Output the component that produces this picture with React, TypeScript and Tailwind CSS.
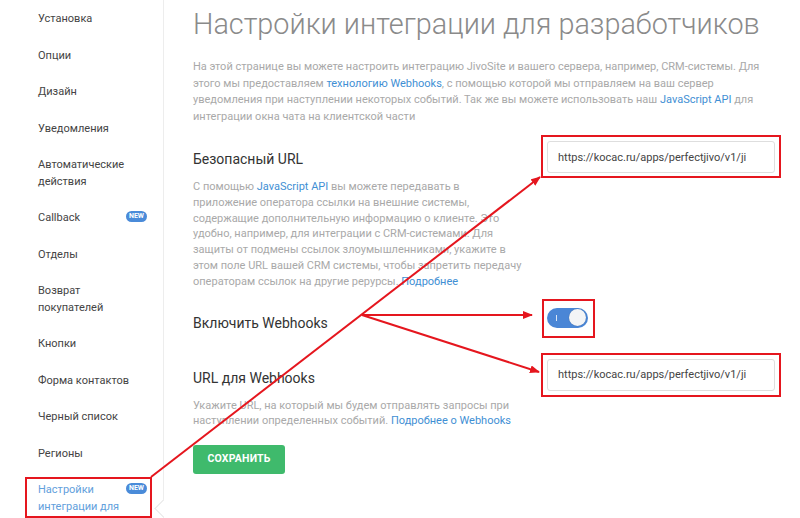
import type { ReactNode } from 'react'

type NavItem = { label: ReactNode; badge?: boolean; active?: boolean }

const navItems: NavItem[] = [
  { label: 'Установка' },
  { label: 'Опции' },
  { label: 'Дизайн' },
  { label: 'Уведомления' },
  { label: <>Автоматические<br />действия</> },
  { label: 'Callback', badge: true },
  { label: 'Отделы' },
  { label: <>Возврат<br />покупателей</> },
  { label: 'Кнопки' },
  { label: 'Форма контактов' },
  { label: 'Черный список' },
  { label: 'Регионы' },
  { label: <>Настройки<br />интеграции для<br />разработчиков</>, badge: true, active: true },
]

function NewBadge() {
  return (
    <span className="absolute right-[16px] top-[11px] flex h-[11px] w-[21px] items-center justify-center rounded-full bg-[#4a8bd9] text-[7px] font-bold leading-none text-white">
      NEW
    </span>
  )
}

function Link({ children }: { children: ReactNode }) {
  return <a className="text-[#3f8fd4]">{children}</a>
}

function UrlInput() {
  return (
    <input
      readOnly
      value="https://kocac.ru/apps/perfectjivo/v1/jivosite/webhook"
      className="h-[32px] w-[228px] rounded-[3px] border border-[#dedede] bg-white pl-[10px] pr-[28px] text-[11px] text-[#444] outline-none"
    />
  )
}

function Toggle() {
  return (
    <div className="relative h-[20px] w-[41px] rounded-full bg-[#4a86d6]">
      <span className="absolute left-[9px] top-[7px] h-[6px] w-[1px] bg-white/80" />
      <span className="absolute right-[2px] top-[1.5px] h-[17px] w-[17px] rounded-full bg-[#f3f4f6] shadow-[0_0_1px_rgba(0,0,0,0.3)]" />
    </div>
  )
}

export default function App() {
  return (
    <div className="relative flex h-[518px] w-[800px] overflow-hidden bg-white font-['Roboto','Liberation_Sans',sans-serif]">
      {/* SIDEBAR */}
      <aside className="relative w-[164px] shrink-0 border-r border-[#ededed] pt-[1px]">
        <ul>
          {navItems.map((item, i) => (
            <li
              key={i}
              className={`relative py-[10px] pl-[38px] pr-[16px] text-[11px] leading-[16.5px] ${
                item.active ? 'text-[#62a0dc]' : 'text-[#444]'
              }`}
            >
              {item.label}
              {item.badge && <NewBadge />}
            </li>
          ))}
        </ul>
        <span className="absolute right-[-7px] top-[502px] h-[13px] w-[13px] rotate-45 border-b border-l border-[#e6e6e6] bg-white" />
      </aside>

      {/* CONTENT */}
      <main className="flex-1 pl-[29px] pt-[5px]">
        <h1 className="whitespace-nowrap text-[28.8px] font-light leading-[38px] text-[#8a8a8a]">
          Настройки интеграции для разработчиков
        </h1>
        <p className="mt-[16px] whitespace-nowrap text-[11px] leading-[16.7px] text-[#a9a9a9]">
          На этой странице вы можете настроить интеграцию JivoSite и вашего сервера, например, CRM-системы. Для
          <br />
          этого мы предоставляем <Link>технологию Webhooks</Link>, с помощью которой мы отправляем на ваш сервер
          <br />
          уведомления при наступлении некоторых событий. Так же вы можете использовать наш <Link>JavaScript API</Link> для
          <br />
          интеграции окна чата на клиентской части
        </p>

        <div className="mt-[15.2px] grid grid-cols-[335px_228px] gap-x-[19px]">
          <div>
            <h2 className="pt-[8px] text-[14px] leading-[20px] text-[#333]">Безопасный URL</h2>
            <p className="mt-[10px] whitespace-nowrap text-[11px] leading-[15.8px] text-[#a9a9a9]">
              С помощью <Link>JavaScript API</Link> вы можете передавать в
              <br />
              приложение оператора ссылки на внешние системы,
              <br />
              содержащие дополнительную информацию о клиенте. Это
              <br />
              удобно, например, для интеграции с CRM-системами. Для
              <br />
              защиты от подмены ссылок злоумышленниками, укажите в
              <br />
              этом поле URL вашей CRM системы, чтобы запретить передачу
              <br />
              операторам ссылок на другие рерурсы. <Link>Подробнее</Link>
            </p>
          </div>
          <div>
            <UrlInput />
          </div>
        </div>

        <div className="mt-[18px] grid grid-cols-[335px_228px] gap-x-[19px]">
          <h2 className="pt-[5px] text-[14px] leading-[20px] text-[#333]">Включить Webhooks</h2>
          <div>
            <Toggle />
          </div>
        </div>

        <div className="mt-[26px] grid grid-cols-[335px_228px] gap-x-[19px]">
          <div>
            <h2 className="pt-[9px] text-[14px] leading-[20px] text-[#333]">URL для Webhooks</h2>
            <p className="mt-[10px] whitespace-nowrap text-[11px] leading-[15.8px] text-[#a9a9a9]">
              Укажите URL, на который мы будем отправлять запросы при
              <br />
              наступлении определенных событий. <Link>Подробнее о Webhooks</Link>
            </p>
          </div>
          <div>
            <UrlInput />
          </div>
        </div>

        <button className="mt-[15.4px] h-[29px] w-[92px] rounded-[3px] bg-[#3fba6c] text-[10.5px] font-bold tracking-[0.2px] text-white">
          СОХРАНИТЬ
        </button>
      </main>

      {/* ANNOTATIONS */}
      <div className="pointer-events-none absolute inset-0">
        <div className="absolute left-[25px] top-[477px] h-[41px] w-[127px] border-2 border-[#e5161e]" />
        <div className="absolute left-[541px] top-[135px] h-[43px] w-[240px] border-2 border-[#e5161e]" />
        <div className="absolute left-[542px] top-[299px] h-[39px] w-[53px] border-2 border-[#e5161e]" />
        <div className="absolute left-[541px] top-[353px] h-[44px] w-[240px] border-2 border-[#e5161e]" />
        <svg className="absolute inset-0" width="800" height="518" viewBox="0 0 800 518">
          <defs>
            <marker id="head" markerWidth="10" markerHeight="8" refX="9" refY="4" orient="auto" markerUnits="userSpaceOnUse">
              <path d="M0 0 L10 4 L0 8 Z" fill="#e5161e" />
            </marker>
          </defs>
          <g stroke="#e5161e" strokeWidth="2" fill="none">
            <line x1="151" y1="477" x2="540" y2="177" markerEnd="url(#head)" />
            <line x1="362" y1="315" x2="532" y2="315" markerEnd="url(#head)" />
            <line x1="362" y1="315" x2="539" y2="372" markerEnd="url(#head)" />
          </g>
        </svg>
      </div>
    </div>
  )
}
